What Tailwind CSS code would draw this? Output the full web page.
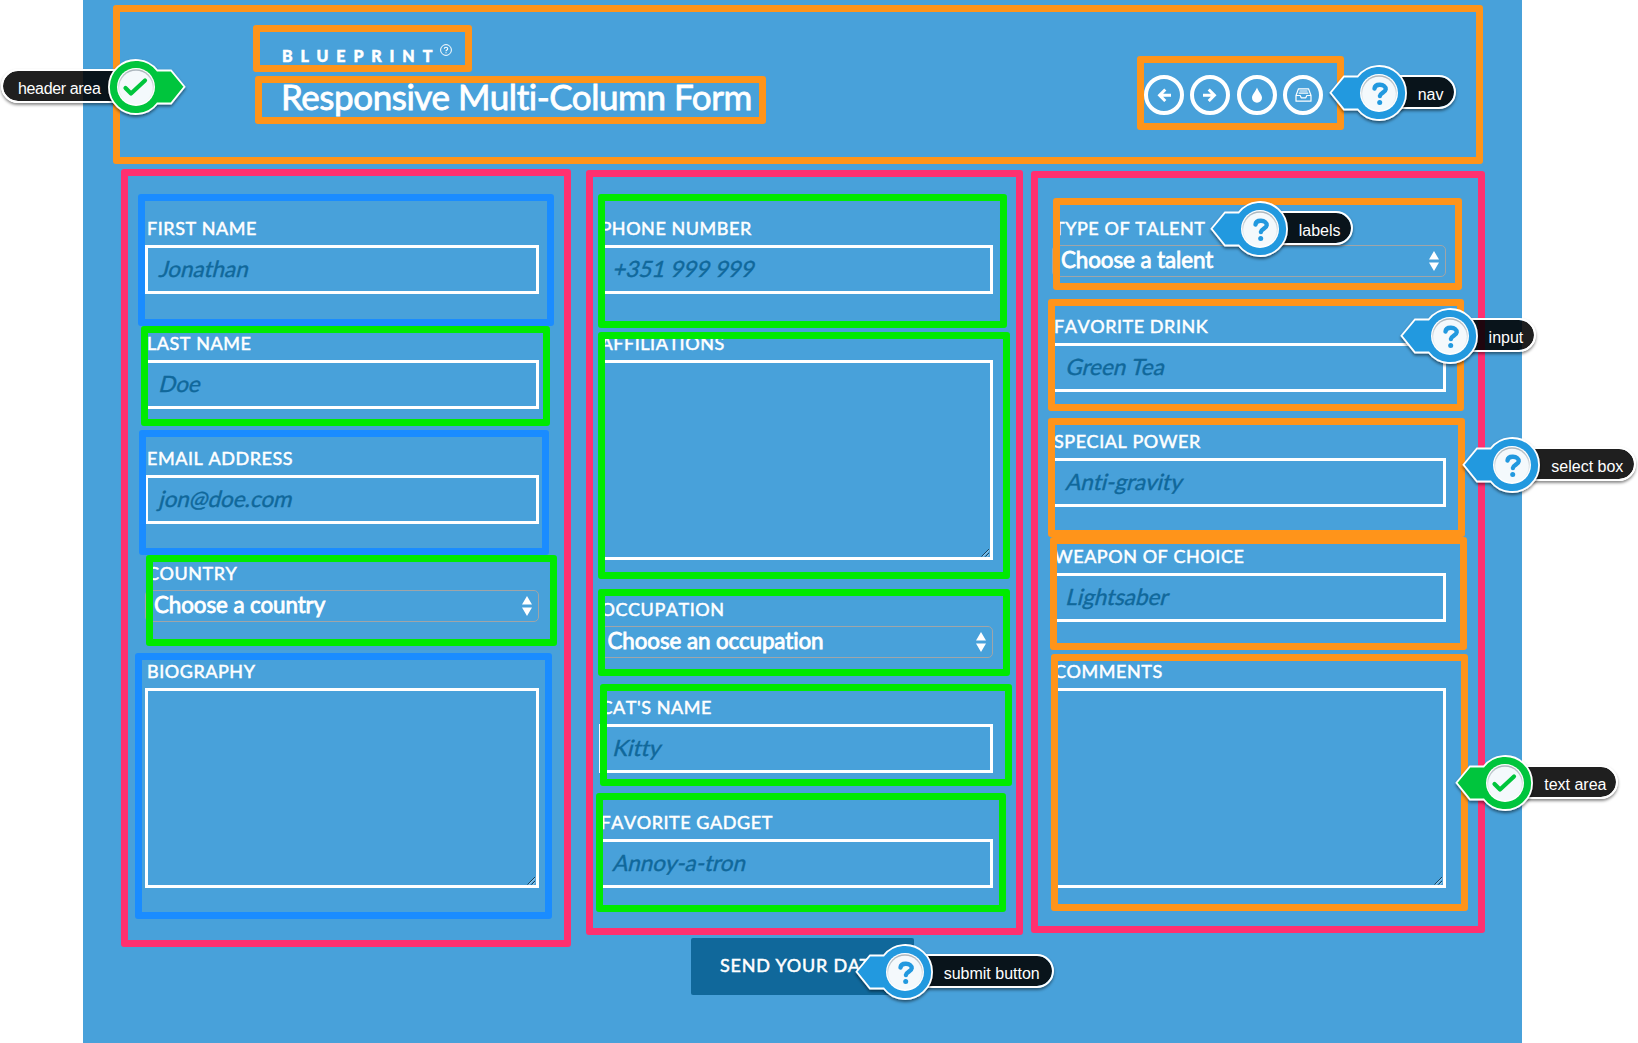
<!DOCTYPE html>
<html lang="en"><head><meta charset="utf-8"><title>Responsive Multi-Column Form</title>
<script src="https://cdn.jsdelivr.net/npm/@tailwindcss/browser@4"></script></head>
<body class="relative h-[1043px] w-[1638px] overflow-hidden bg-white font-['Lato',sans-serif] [font-variant-ligatures:none]">
<svg class="absolute size-0">
<defs>
<filter id="sh" x="-30%" y="-30%" width="160%" height="170%"><feDropShadow dx="0" dy="2" stdDeviation="1.5" flood-color="#000" flood-opacity=".5"/></filter>
<linearGradient id="face" x1="0" y1="0" x2="0" y2="1"><stop offset="0" stop-color="#a9b4bb"/><stop offset=".5" stop-color="#d5dde2"/><stop offset="1" stop-color="#fff"/></linearGradient>
<g id="dial"><circle r="19" fill="#fff"/><circle r="17.8" fill="url(#face)"/><circle cy=".6" r="16.8" fill="#f4f9fc"/></g>
<path id="pin" d="M-48.500-.2-35-16.500H-21.300A27 27 0 1 1-21.300 16.500H-35Z" stroke="#fff" stroke-width="1.800"/>
<g id="ask"><use href="#pin" fill="#2299df" filter="url(#sh)"/><use href="#dial"/><path d="M-4.500-4.500C-4.200-7.200-2-8.300 1-8.200 4.500-8.100 6.900-6.300 6.700-3.700 6.400-.6 1.200-.3.900 3" fill="none" stroke="#2299df" stroke-width="4.400" stroke-linecap="round"/><circle cx=".7" cy="9.500" r="2.500" fill="#2299df"/></g>
<g id="tick"><path d="M-10.500 1-5 6.500 9-6.500" fill="none" stroke="#00c53c" stroke-width="4.200" stroke-linecap="round" stroke-linejoin="round"/></g>
</defs></svg>

<main class="ml-[83px] h-[1043px] w-[1439px] bg-[#48a1da] text-white">
  <header class="flex h-[209px] justify-between pl-[198px] pr-[199px]">
    <div>
      <div class="flex pt-[44px] pl-[1px] text-[16px] leading-[24px] font-black tracking-[7.900px] [-webkit-text-stroke:0.5px_#fff]">BLUEPRINT
        <svg class="size-3" viewBox="0 0 12 12" fill="none" stroke="#fff"><circle cx="6" cy="6" r="5.400"/><path d="M4.300 4.800C4.300 2.700 7.700 2.700 7.700 4.700 7.700 6 6 6 6 7.300M6 8.200V9.200" stroke-width="1.100"/></svg></div>
      <h1 class="text-[35px] leading-[56px] tracking-[-0.450px] [-webkit-text-stroke:0.8px_#fff]">Responsive Multi-Column Form</h1>
    </div>
    <nav class="flex gap-[6.400px] pt-[75px]">
      <a class="grid size-[40px] place-items-center rounded-full border-4 border-white"><svg class="size-[14px]" viewBox="0 0 14 14" fill="none" stroke="#fff" stroke-width="3"><path d="M8.300 1.500 2.600 7.200 8.300 13M3 7.200H14"/></svg></a>
      <a class="grid size-[40px] place-items-center rounded-full border-4 border-white"><svg class="size-[14px]" viewBox="0 0 14 14" fill="none" stroke="#fff" stroke-width="3"><path d="M5.700 1.500 11.400 7.200 5.700 13M11 7.200H0"/></svg></a>
      <a class="grid size-[40px] place-items-center rounded-full border-4 border-white"><svg class="h-[16px] w-[12px]" viewBox="0 0 12 16" fill="#fff"><path d="M6 .5C7 4 11 7.500 11 10.800A5 5 0 0 1 1 10.800C1 7.500 5 4 6 .5Z"/></svg></a>
      <a class="grid size-[40px] place-items-center rounded-full border-4 border-white"><svg class="h-[14px] w-[17px]" viewBox="0 0 17 14" fill="none" stroke="#fff" stroke-width="1.200" stroke-linejoin="round"><path d="M1 7.500 3.500.8H13.500L16 7.500V13.200H1ZM1 7.500H5.200L6.200 9.800H10.800L11.800 7.500H16M4.500 3H12.500M3.700 5.200H13.300"/></svg></a>
    </nav>
  </header>
  <form class="flex gap-[59.500px] pl-[62px] text-[21px]">
    <section class="w-[394px]" id="c1"></section>
    <section class="w-[394px]" id="c2"></section>
    <section class="w-[394px]" id="c3"></section>
  </form>
  <button class="mt-[20px] ml-[608px] block h-[57px] w-[223px] rounded-[2px] bg-[#10689b] pb-[2px] pl-[29px] text-left text-[18px] tracking-[0.8px] [-webkit-text-stroke:0.5px_#fff]">SEND YOUR DATA</button>
</main>
<div id="marks"></div>
<script>
const label = t => `<label class="block h-[36px] pt-[7px] pl-[2px] text-[18px] leading-[24px] tracking-[0.550px] whitespace-nowrap [font-kerning:none] [-webkit-text-stroke:0.5px_#fff]">${t}</label>`;
const field = {
  i: (l, p) => `<div class="mb-[30px]">${label(l)}<div class="h-[49px] border-3 border-white pl-[12px] text-[22.400px] leading-[42px] text-[#10689b] [-webkit-text-stroke:0.4px_#10689b]"><span class="inline-block -skew-x-[14deg]">${p}</span></div></div>`,
  s: (l, p) => `<div class="mb-[30px]">${label(l)}<div class="flex h-[32px] items-center justify-between rounded-[5px] border border-[#a0a5a8] pr-[6px] pb-[2px] pl-[8px] text-[22.400px] tracking-[-0.1px] [-webkit-text-stroke:0.8px_#fff]">${p}<svg class="mt-[2px] h-[20px] w-[10px]" viewBox="0 0 10 20" fill="#fff"><path d="M5 0 10 8.500H0ZM5 20 10 11.500H0Z"/></svg></div></div>`,
  t: l => `<div class="mb-[30px]">${label(l)}<div class="flex h-[200px] items-end justify-end border-3 border-white"><svg class="size-[9px]" viewBox="0 0 9 9" stroke="#17425e"><path d="M.5 8.500 8 1M4.500 8.500 8 5"/><path d="M1.700 8.700 8.500 2M5.700 8.700 8.500 6" stroke="#e4f1f9" stroke-width=".7"/></svg></div></div>`
};
const cols = {
  c1: [['i','FIRST NAME','Jonathan'],['i','LAST NAME','Doe'],['i','EMAIL ADDRESS','jon@doe.com'],['s','COUNTRY','Choose a country'],['t','BIOGRAPHY']],
  c2: [['i','PHONE NUMBER','+351 999 999'],['t','AFFILIATIONS'],['s','OCCUPATION','Choose an occupation'],['i',"CAT'S NAME",'Kitty'],['i','FAVORITE GADGET','Annoy-a-tron']],
  c3: [['s','TYPE OF TALENT','Choose a talent'],['i','FAVORITE DRINK','Green Tea'],['i','SPECIAL POWER','Anti-gravity'],['i','WEAPON OF CHOICE','Lightsaber'],['t','COMMENTS']]
};
for (const id in cols) document.getElementById(id).innerHTML = cols[id].map(([k, l, p]) => field[k](l, p)).join('');

// Annotation frames: colour, left, top, right, bottom
const O = 'border-[#ff941a]', P = 'border-[#ff3070]', G = 'border-[#00ea00]', B = 'border-[#1a8cff]';
const frames = [[O,113,5,1483,164],[O,253,25,472,72],[O,255,76,766,124],[O,1137,56,1344,130],
[P,121,169,571,947],[P,586,170,1023,935],[P,1031,171,1485,933],
[B,138,194,554,326],[G,141,326,550,426],[B,139,430,549,555],[G,146,555,557,646],[B,135,653,552,919],
[G,598,194,1007,328],[G,598,332,1010,579],[G,598,589,1010,676],[G,600,684,1012,786],[G,596,793,1006,912],
[O,1053,198,1462,290],[O,1048,299,1464,411],[O,1048,418,1465,537],[O,1050,537,1467,650],[O,1051,654,1468,911]];
let html = frames.map(([c,x,y,r,b]) => `<div class="absolute rounded-[3px] border-7 ${c}" style="left:${x}px;top:${y}px;width:${r-x}px;height:${b-y}px"></div>`).join('');

// Callouts: centre x, centre y, far end of the pill, text
const notes = [[1378.7,93,1456,'nav'],[1259.700,229,1353,'labels'],[1449.600,336,1536,'input'],[1512.300,465,1636,'select box'],[904.700,972,1054,'submit button'],[1505.200,783.300,1618,'text area',1],[136,87,1,'header area',1]];
html += notes.map(([x,y,e,t,ok]) => {
  const flip = e < x, l = flip ? e : x, w = Math.abs(e - x);
  return `<div class="absolute flex h-[34px] items-center rounded-full border-2 border-white bg-black/88 bg-clip-padding pt-[6px] font-['Liberation_Sans',sans-serif] text-[16px] whitespace-nowrap text-white shadow-[0_2px_3px_rgba(0,0,0,0.45)] ${flip ? 'pl-[15px] tracking-[-0.350px]' : 'pl-[37px]'}" style="left:${l}px;top:${y-18}px;width:${w}px">${t}</div>
  <svg class="absolute h-[68px] w-[84px]" style="left:${flip ? x-32 : x-52}px;top:${y-34}px" viewBox="${flip ? -32 : -52} -34 84 68">${ok ? `<g ${flip ? 'transform="scale(-1 1)"' : ''}><use href="#pin" fill="#00c53c" filter="url(#sh)"/></g><use href="#dial"/><use href="#tick"/>` : '<use href="#ask"/>'}</svg>`;
}).join('');
document.getElementById('marks').innerHTML = html;
</script>
</body></html>
